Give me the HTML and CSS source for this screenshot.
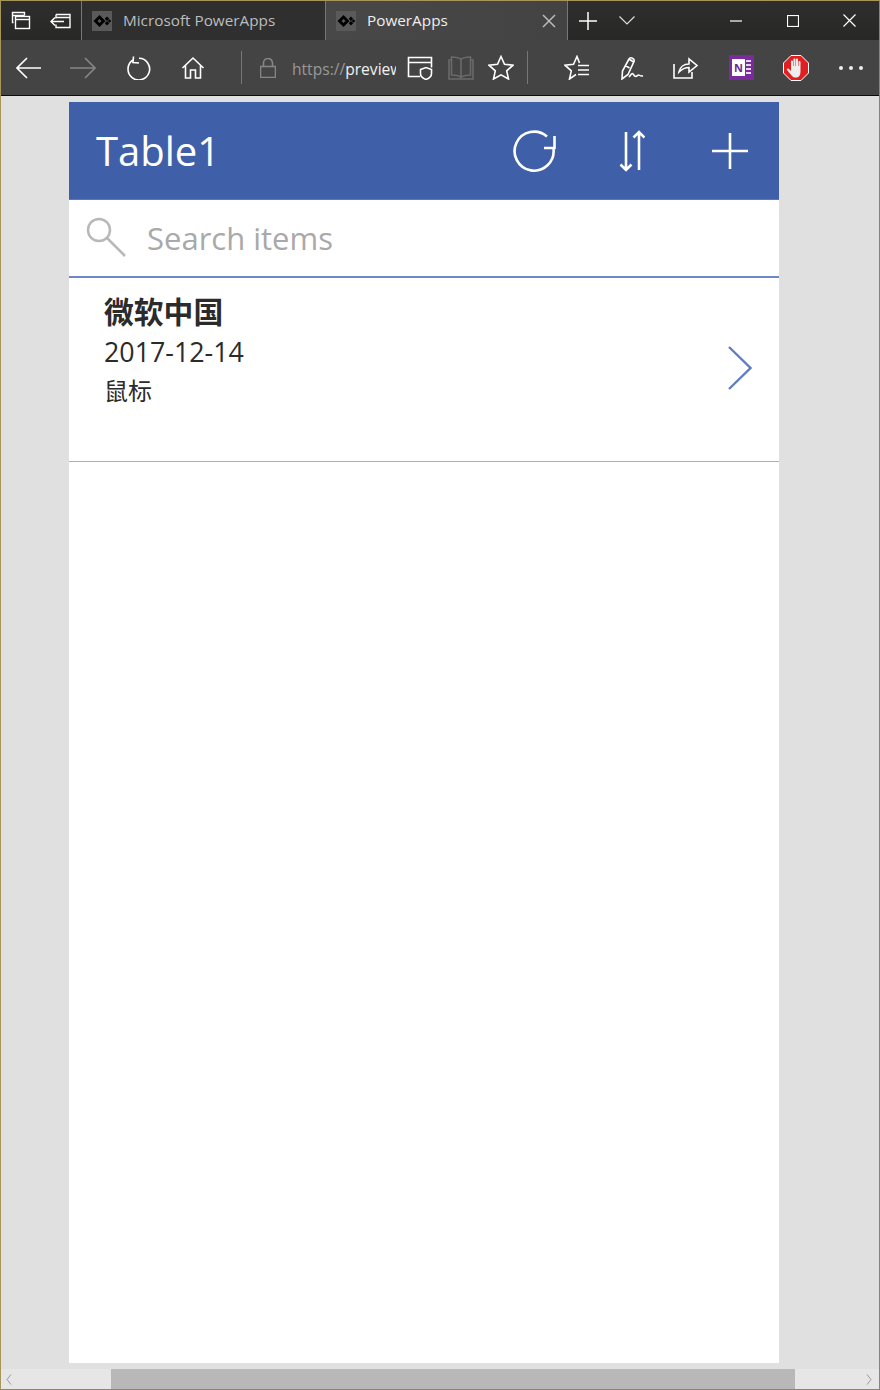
FILE: index.html
```html
<!DOCTYPE html>
<html lang="en">
<head>
  <meta charset="UTF-8">
  <title>PowerApps</title>
  <link rel="stylesheet" href="styles.css">
</head>
<body>
<div class="window">

  <div class="titlebar">
    <div class="tab-tools">
      <svg class="slot-40" width="20" height="20" viewBox="0 0 20 20"><path d="M2.500 11.500h-1v-10h12v3M1.500 4.500h12"/><rect x="4.500" y="5.500" width="14" height="12"/><path d="M4.500 8.500h14"/></svg>
      <svg class="slot-40" width="22" height="20" viewBox="0 0 22 20"><path d="M6 3.500h14v13H6v-3M6 6.500h14M6 3.500v4M1 10.500h13M5 6.500l-4 4 4 4"/></svg>
    </div>
    <div class="tab">
      <svg class="favicon" width="20" height="20" viewBox="0 0 20 20"><rect width="20" height="20" class="fav-bg"/><path class="fav-mark" d="M7.500 4l6 6-6 6-6-6zM7.500 8l-2 2 2 2 2-2zM15 5.500l2.200 2.200L15 10l-2.200-2.300zM15 10l2.200 2.300L15 14.500l-2.200-2.200zM17.500 8.300l1.700 1.700-1.700 1.700-1.700-1.700z"/></svg>
      <span class="tab-name">Microsoft PowerApps</span>
    </div>
    <div class="tab tab-active">
      <svg class="favicon" width="20" height="20" viewBox="0 0 20 20"><rect width="20" height="20" class="fav-bg"/><path class="fav-mark" d="M7.500 4l6 6-6 6-6-6zM7.500 8l-2 2 2 2 2-2zM15 5.500l2.200 2.200L15 10l-2.200-2.300zM15 10l2.200 2.300L15 14.500l-2.200-2.200zM17.500 8.300l1.700 1.700-1.700 1.700-1.700-1.700z"/></svg>
      <span class="tab-name">PowerApps</span>
      <svg class="tab-close" width="14" height="14" viewBox="0 0 14 14"><path d="M1 1l12 12M13 1L1 13"/></svg>
    </div>
    <svg class="new-tab" width="18" height="18" viewBox="0 0 18 18"><path d="M9 0v18M0 9h18"/></svg>
    <svg class="tab-list" width="16" height="9" viewBox="0 0 16 9"><path d="M.5.500L8 8 15.500.500"/></svg>
    <div class="win-controls">
      <svg width="12" height="2" viewBox="0 0 12 2"><path d="M0 1h12"/></svg>
      <svg width="12" height="12" viewBox="0 0 12 12"><rect x=".5" y=".5" width="11" height="11"/></svg>
      <svg width="13" height="13" viewBox="0 0 13 13"><path d="M.5.500l12 12M12.500.500l-12 12"/></svg>
    </div>
  </div>

  <div class="toolbar">
    <div class="slot slot-back"><svg width="26" height="22" viewBox="0 0 26 22"><path d="M1 11h24M11 1L1 11l10 10"/></svg></div>
    <div class="slot slot-fwd dim"><svg width="26" height="22" viewBox="0 0 26 22"><path d="M0 11h24M15 1l10 10-10 10"/></svg></div>
    <div class="slot slot-refresh"><svg width="24" height="24" viewBox="0 0 24 24"><path d="M6 4a10.800 10.800 0 1 0 6-1.700M6.500 .5L6 6.500l6 .5"/></svg></div>
    <div class="slot slot-home"><svg width="24" height="24" viewBox="0 0 24 24"><path d="M1.500 12L12 2l10.500 10M4.500 9.500V22h5v-8h5v8h5V9.500"/></svg></div>
    <span class="divider divider-a"></span>
    <div class="slot slot-lock dim"><svg width="16" height="20" viewBox="0 0 16 20"><rect x=".5" y="8.500" width="15" height="11"/><path d="M3.500 8.500V5a4.500 4.500 0 0 1 9 0v3.500"/></svg></div>
    <div class="address"><span class="scheme">https://</span>preview</div>
    <div class="slot slot-shield"><svg width="26" height="24" viewBox="0 0 26 24"><path d="M13 20.500H1.500v-19h23v10M1.500 6.500h23"/><path d="M13.500 13.500l5.500-2 5.500 2v4c0 3-2.500 5-5.500 6-3-1-5.500-3-5.500-6z"/></svg></div>
    <div class="slot slot-book faint"><svg width="26" height="24" viewBox="0 0 26 24"><path d="M13 3.500C11 1.500 8 1 3.500 1v18c4.500 0 7.500.5 9.500 2.500 2-2 5-2.500 9.500-2.500V1C18 1 15 1.500 13 3.500zM13 3.500v18M3.500 4H1v19h24V4h-2.500"/></svg></div>
    <div class="slot slot-star"><svg width="26" height="25" viewBox="0 0 26 25"><path d="M13 1.500l3.500 7.800 8.500.9-6.300 5.600 1.800 8.200L13 19.800 5.500 24l1.800-8.200L1 10.200l8.500-.9z"/></svg></div>
    <span class="divider divider-b"></span>
    <div class="slot slot-fav"><svg width="26" height="25" viewBox="0 0 26 25"><path d="M12 19.500L5.500 24l1.800-8.200L1 10.200l8.500-.9L13 1.500l2.500 6.500M14 10.500h11M14 15h11M14 19.500h11"/></svg></div>
    <div class="slot slot-pen"><svg width="24" height="24" viewBox="0 0 24 24"><path d="M2 23l.5-8L9 3c1.500-2.500 6-.5 5 2.500L8 18.500zM9 3l4.500 3M5.500 9.500l4 2.500M9 21c1.500-2 2.500-3.500 3.500-3.500s1.500 3 3 3 2-1.500 3-1.500 2 1.500 4.500.8"/></svg></div>
    <div class="slot slot-share"><svg width="26" height="22" viewBox="0 0 26 22"><path d="M1 7v14h18v-6M6 15c1-5 5-8 10-8V2l8 6.500L16 15v-4.500c-4 0-7 1.500-10 4.500z"/></svg></div>
    <div class="slot slot-note">
      <div class="onenote"><span class="onenote-n">N</span><span class="onenote-tabs"></span></div>
    </div>
    <div class="slot slot-stop"><svg class="fill-icon" width="26" height="26" viewBox="0 0 26 26"><path class="stop-ring" d="M8 .500h10l7.500 7.500v10L18 25.500H8L.5 18V8z"/><path class="stop-hand" d="M9 21l-5-6c-.7-1 .8-2.200 1.700-1.200L8 16V6.500c0-1.300 2-1.300 2 0V11h.5V4.500c0-1.300 2-1.300 2 0V11h.5V4.500c0-1.300 2-1.300 2 0V11h.5V7c0-1.300 2-1.300 2 0v9c0 4-1 6-3.500 6.500h-2C11 22.500 10 22 9 21z"/></svg></div>
    <div class="slot slot-more"><span class="dot"></span><span class="dot"></span><span class="dot"></span></div>
  </div>

  <div class="content">
    <div class="app">
      <div class="app-header">
        <span class="app-title">Table1</span>
        <svg class="hdr-refresh" width="44" height="44" viewBox="0 0 44 44"><path d="M41.500 20a19.500 19.500 0 1 1-6.500-12.500"/><path d="M32 19h10.500V7"/></svg>
        <svg class="hdr-sort" width="26" height="42" viewBox="0 0 26 42"><path d="M7 2v38M1.500 34.500L7 40l5.500-5.500M20 40V2M14.500 7.500L20 2l5.500 5.500"/></svg>
        <svg class="hdr-add" width="36" height="36" viewBox="0 0 36 36"><path d="M18 0v36M0 18h36"/></svg>
      </div>
      <div class="search">
        <svg class="search-icon" width="40" height="40" viewBox="0 0 40 40"><circle cx="13" cy="13" r="11"/><path d="M21 21l18 18"/></svg>
        <span class="search-text">Search items</span>
      </div>
      <div class="row">
        <div class="row-text">
          <div class="row-title">微软中国</div>
          <div class="row-date">2017-12-14</div>
          <div class="row-sub">鼠标</div>
        </div>
        <svg class="row-arrow" width="24" height="44" viewBox="0 0 24 44"><path d="M1 1l21.500 21L1 43"/></svg>
      </div>
    </div>
  </div>

  <div class="scrollbar">
    <svg class="scroll-arrow" width="6" height="11" viewBox="0 0 6 11"><path d="M5 .5L1 5.500l4 5"/></svg>
    <div class="scroll-thumb"></div>
    <svg class="scroll-arrow" width="6" height="11" viewBox="0 0 6 11"><path d="M1 .5l4 5-4 5"/></svg>
  </div>

</div>
</body>
</html>
```

FILE: styles.css
```css
* {
  box-sizing: border-box;
}

html, body {
  margin: 0;
  height: 100%;
  overflow: hidden;
}

body {
  font-family: "Open Sans", "Noto Sans CJK SC", sans-serif;
  background: #e0e0e0;
}

svg {
  display: block;
  fill: none;
  stroke: #fff;
  stroke-width: 1.5;
  flex: none;
}

.window {
  display: flex;
  flex-direction: column;
  width: 880px;
  height: 1390px;
  border: 1px solid #8f8560;
  border-top-color: #a8955a;
  border-left-color: #a8955a;
}

/* title bar */
.titlebar {
  display: flex;
  align-items: center;
  height: 39px;
  flex: none;
  background: linear-gradient(#2e2e2e, #282827);
}

.tab-tools {
  display: flex;
  width: 81px;
  height: 100%;
  align-items: center;
  justify-content: space-around;
  border-right: 1px solid #777;
}

.tab-tools svg {
  stroke-width: 1.4;
}

.slot-40 {
  margin: 0 9px;
}

.tab {
  display: flex;
  align-items: center;
  width: 244px;
  height: 100%;
  padding-left: 10px;
  background: #2f2f2f;
  border-right: 1px solid #777;
}

.tab-active {
  width: 242px;
  background: linear-gradient(to right, #484848, #434343);
}

.fav-bg {
  fill: #5a5a5a;
  stroke: none;
}

.fav-mark {
  fill: #000;
  fill-rule: evenodd;
  stroke: none;
}

.favicon {
  margin-right: 11px;
}

.tab-name {
  font-size: 15.3px;
  color: #bdbdbd;
  white-space: nowrap;
  margin-top: -1px;
}

.tab-active .tab-name {
  color: #eee;
}

.tab-close {
  margin-left: auto;
  margin-right: 11px;
  stroke: #bbb;
}

.new-tab {
  margin-left: 11px;
}

.tab-list {
  margin-left: 22px;
  stroke: #ddd;
  stroke-width: 1.2;
}

.win-controls {
  display: flex;
  align-items: center;
  margin-left: auto;
  margin-right: 23px;
}

.win-controls svg {
  margin-left: 45px;
  stroke-width: 1.2;
}

.win-controls svg:last-child {
  margin-left: 44px;
}

/* toolbar */
.toolbar {
  display: flex;
  align-items: center;
  height: 56px;
  flex: none;
  background: #444;
  border-bottom: 1px solid #0c0c0c;
}

.slot {
  display: flex;
  align-items: center;
  justify-content: center;
  flex: none;
}

.slot svg {
  stroke-width: 1.6;
}

.slot-back { width: 56px; }
.slot-fwd { width: 52px; }
.slot-refresh { width: 60px; }
.slot-home { width: 48px; }
.slot-lock { width: 50px; padding-left: 1px; }
.slot-shield { width: 48px; }
.slot-book { width: 32px; padding-left: 1px; }
.slot-star { width: 48px; padding-left: 1px; }
.slot-fav { width: 54px; margin-left: 22px; }
.slot-pen { width: 56px; }
.slot-share { width: 52px; }
.slot-note { width: 58px; }
.slot-stop { width: 52px; }
.slot-more { width: 58px; gap: 6px; }

.dim svg {
  stroke: #858585;
}

.faint svg {
  stroke: #6a6a6a;
}

.divider {
  width: 1px;
  height: 33px;
  flex: none;
  background: #777;
}

.divider-a {
  margin-left: 24px;
}

.divider-b {
  margin-left: 3px;
}

.address {
  width: 104px;
  flex: none;
  overflow: hidden;
  white-space: nowrap;
  margin-top: 3px;
  font-size: 15.6px;
  color: #f2f2f2;
}

.scheme {
  color: #999;
}

.onenote {
  display: flex;
  align-items: center;
  justify-content: center;
  position: relative;
  width: 25px;
  height: 25px;
  background: #7b2b9d;
}

.onenote-n {
  width: 13px;
  height: 17px;
  background: #fff;
  color: #6a2a90;
  font-size: 11px;
  font-weight: 700;
  line-height: 17px;
  text-align: center;
  margin-right: 5px;
}

.onenote-tabs {
  position: absolute;
  right: 3px;
  top: 5px;
  width: 5px;
  height: 15px;
  background: repeating-linear-gradient(#e6d6ee 0 2px, #7b2b9d 2px 4px);
}

.fill-icon {
  stroke: none;
}

.stop-ring {
  fill: #e02020;
  stroke: #fff;
  stroke-width: 1;
}

.stop-hand {
  fill: #eee;
  stroke: none;
}

.dot {
  width: 4px;
  height: 4px;
  background: #eee;
  border-radius: 50%;
}

/* page area */
.content {
  flex: 1;
  min-height: 0;
  padding: 6px 0 6px 68px;
}

.app {
  display: flex;
  flex-direction: column;
  width: 710px;
  height: 100%;
  background: #fff;
}

.app-header {
  display: flex;
  align-items: center;
  height: 98px;
  flex: none;
  padding-left: 27px;
  background: #3f5fa9;
  border-bottom: 1px solid #5b78bd;
}

.app-title {
  font-size: 40px;
  color: #fff;
  line-height: 1;
}

.app-header svg {
  stroke-width: 2.6;
}

.hdr-refresh {
  margin-left: auto;
  margin-top: 1px;
}

.hdr-sort {
  margin-left: 63px;
  margin-top: 1px;
}

.hdr-add {
  margin-left: 67px;
  margin-right: 31px;
}

.search {
  display: flex;
  align-items: center;
  height: 78px;
  flex: none;
  padding-left: 17px;
  border-bottom: 2px solid #6f88c8;
}

.search-icon {
  stroke: #b8b8b8;
  stroke-width: 2.5;
  margin-top: -3px;
}

.search-text {
  margin-left: 21px;
  font-size: 31px;
  color: #a9a9a9;
  line-height: 1;
}

.row {
  display: flex;
  align-items: center;
  height: 184px;
  flex: none;
  padding-left: 35px;
  border-bottom: 1px solid #9fb1d3;
}

.row-text {
  align-self: flex-start;
  padding-top: 14px;
  color: #2b2b2b;
}

.row-title {
  font-size: 29.8px;
  font-weight: 700;
  line-height: 40px;
}

.row-date {
  font-size: 26.8px;
  line-height: 39px;
}

.row-sub {
  font-size: 24px;
  line-height: 40px;
}

.row-arrow {
  margin-left: auto;
  margin-right: 27px;
  margin-bottom: 3px;
  stroke: #5f7dc0;
  stroke-width: 2.4;
}

/* scrollbar */
.scrollbar {
  display: flex;
  align-items: center;
  height: 20px;
  flex: none;
  background: #e6e6e6;
  padding: 0 7px 0 5px;
}

.scrollbar svg {
  stroke: #999;
  stroke-width: 1;
}

.scroll-thumb {
  width: 685px;
  height: 100%;
  margin-left: 99px;
  margin-right: 71px;
  background: #b8b8b8;
}
```
